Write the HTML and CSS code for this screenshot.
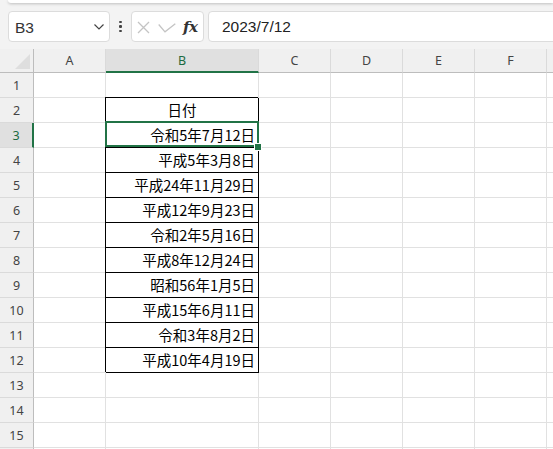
FILE: index.html
```html
<!DOCTYPE html>
<html lang="ja">
<head>
<meta charset="utf-8">
<title>Sheet</title>
<link rel="stylesheet" href="styles.css">
</head>
<body>
<div class="app">
  <div class="ribbon-edge"></div>
  <div class="fbar">
    <div class="namebox">
      <span class="nb-text">B3</span>
      <svg class="chev" width="10" height="6" viewBox="0 0 10 6"><path d="M0.5 0.5 L5 5 L9.5 0.5" fill="none" stroke="#444" stroke-width="1.2"/></svg>
    </div>
    <div class="dots"><span></span><span></span><span></span></div>
    <div class="fxbox">
      <svg class="ic-x" width="13" height="13" viewBox="0 0 13 13"><path d="M1 1 L12 12 M12 1 L1 12" stroke="#c4c4c4" stroke-width="1.3" fill="none"/></svg>
      <svg class="ic-ok" width="18" height="10" viewBox="0 0 18 10"><path d="M0.7 1.5 L7 8.8 L17.3 0.7" stroke="#c4c4c4" stroke-width="1.3" fill="none"/></svg>
      <span class="fx">fx</span>
    </div>
    <div class="formula">2023/7/12</div>
  </div>
  <div class="sheet">
    <div class="corner"><span class="tri"></span></div>
    <div class="ch">A</div><div class="ch sel">B</div><div class="ch">C</div><div class="ch">D</div><div class="ch">E</div><div class="ch">F</div><div class="ch"></div>

    <div class="rh">1</div><div class="c"></div><div class="c"></div><div class="c"></div><div class="c"></div><div class="c"></div><div class="c"></div><div class="c"></div>
    <div class="rh">2</div><div class="c"></div><div class="c b ctr">日付</div><div class="c"></div><div class="c"></div><div class="c"></div><div class="c"></div><div class="c"></div>
    <div class="rh sel">3</div><div class="c"></div><div class="c b r active">令和5年7月12日</div><div class="c"></div><div class="c"></div><div class="c"></div><div class="c"></div><div class="c"></div>
    <div class="rh">4</div><div class="c"></div><div class="c b r">平成5年3月8日</div><div class="c"></div><div class="c"></div><div class="c"></div><div class="c"></div><div class="c"></div>
    <div class="rh">5</div><div class="c"></div><div class="c b r">平成24年11月29日</div><div class="c"></div><div class="c"></div><div class="c"></div><div class="c"></div><div class="c"></div>
    <div class="rh">6</div><div class="c"></div><div class="c b r">平成12年9月23日</div><div class="c"></div><div class="c"></div><div class="c"></div><div class="c"></div><div class="c"></div>
    <div class="rh">7</div><div class="c"></div><div class="c b r">令和2年5月16日</div><div class="c"></div><div class="c"></div><div class="c"></div><div class="c"></div><div class="c"></div>
    <div class="rh">8</div><div class="c"></div><div class="c b r">平成8年12月24日</div><div class="c"></div><div class="c"></div><div class="c"></div><div class="c"></div><div class="c"></div>
    <div class="rh">9</div><div class="c"></div><div class="c b r">昭和56年1月5日</div><div class="c"></div><div class="c"></div><div class="c"></div><div class="c"></div><div class="c"></div>
    <div class="rh">10</div><div class="c"></div><div class="c b r">平成15年6月11日</div><div class="c"></div><div class="c"></div><div class="c"></div><div class="c"></div><div class="c"></div>
    <div class="rh">11</div><div class="c"></div><div class="c b r">令和3年8月2日</div><div class="c"></div><div class="c"></div><div class="c"></div><div class="c"></div><div class="c"></div>
    <div class="rh">12</div><div class="c"></div><div class="c b r">平成10年4月19日</div><div class="c"></div><div class="c"></div><div class="c"></div><div class="c"></div><div class="c"></div>
    <div class="rh">13</div><div class="c"></div><div class="c"></div><div class="c"></div><div class="c"></div><div class="c"></div><div class="c"></div><div class="c"></div>
    <div class="rh">14</div><div class="c"></div><div class="c"></div><div class="c"></div><div class="c"></div><div class="c"></div><div class="c"></div><div class="c"></div>
    <div class="rh">15</div><div class="c"></div><div class="c"></div><div class="c"></div><div class="c"></div><div class="c"></div><div class="c"></div><div class="c"></div>
    <div class="rh"></div><div class="c"></div><div class="c"></div><div class="c"></div><div class="c"></div><div class="c"></div><div class="c"></div><div class="c"></div>
  </div>
</div>
</body>
</html>
```

FILE: styles.css
```css
html, body {
  margin: 0;
  padding: 0;
  background: #f3f3f3;
  overflow: hidden;
}
.app {
  width: 553px;
  height: 449px;
  overflow: hidden;
  font-family: "Noto Sans", "Liberation Sans", sans-serif;
  color: #333;
}
.ribbon-edge {
  height: 3px;
  margin-left: 8px;
  background: #fff;
  border-radius: 0 0 0 5px;
  box-shadow: 0 1px 3px rgba(0,0,0,0.22);
}
.fbar {
  display: flex;
  align-items: stretch;
  height: 31px;
  margin-top: 8px;
  padding-left: 8px;
}
.namebox {
  box-sizing: border-box;
  width: 102px;
  background: #fff;
  border: 1px solid #dcdcdc;
  border-radius: 4px;
  display: flex;
  align-items: center;
  justify-content: space-between;
  padding: 0 5px 0 6px;
}
.nb-text {
  font-family: "Liberation Sans", sans-serif;
  font-size: 15.5px;
  color: #333;
  padding-top: 2px;
}
.chev { margin-top: 1px; }
.dots {
  width: 21px;
  display: flex;
  flex-direction: column;
  align-items: center;
  justify-content: center;
  gap: 2px;
}
.dots span {
  width: 2.5px;
  height: 2.5px;
  background: #444;
  border-radius: 1px;
}
.fxbox {
  box-sizing: border-box;
  width: 73px;
  background: #fff;
  border: 1px solid #dcdcdc;
  border-radius: 4px;
  display: flex;
  align-items: center;
  padding-left: 5px;
}
.ic-x { margin-top: 1px; }
.ic-ok { margin-left: 8px; margin-top: 3px; }
.fx {
  font-family: "DejaVu Serif", "Liberation Serif", serif;
  font-style: italic;
  font-weight: bold;
  font-size: 15px;
  color: #333;
  margin-left: 7px;
  letter-spacing: -0.5px;
}
.formula {
  box-sizing: border-box;
  flex: 1;
  margin-left: 4px;
  margin-right: -10px;
  background: #fff;
  border: 1px solid #dcdcdc;
  border-radius: 4px 0 0 4px;
  display: flex;
  align-items: center;
  padding-left: 13px;
  font-family: "Liberation Sans", sans-serif;
  font-size: 15.5px;
  color: #222;
  padding-top: 1px;
}
.sheet {
  margin-top: 7px;
  display: grid;
  grid-template-columns: 34px 72px 153px 72px 72px 72px 72px 72px;
  grid-template-rows: 24px;
  grid-auto-rows: 25px;
  width: 619px;
  background: #fff;
}
.corner {
  box-sizing: border-box;
  background: #f0f0f0;
  border-right: 1px solid #bdbdbd;
  border-bottom: 1px solid #bdbdbd;
  position: relative;
}
.tri {
  position: absolute;
  right: 3px;
  bottom: 3px;
  width: 0;
  height: 0;
  border-left: 15px solid transparent;
  border-bottom: 15px solid #dedede;
}
.ch {
  box-sizing: border-box;
  background: #f0f0f0;
  border-right: 1px solid #dadada;
  border-bottom: 1px solid #bdbdbd;
  display: flex;
  align-items: center;
  justify-content: center;
  font-size: 12.5px;
  color: #444;
}
.ch.sel {
  background: #e0e0e0;
  color: #1d6b40;
  border-bottom: 2px solid #217346;
}
.rh {
  box-sizing: border-box;
  background: #f0f0f0;
  border-right: 1px solid #bdbdbd;
  border-bottom: 1px solid #dadada;
  display: flex;
  align-items: center;
  justify-content: center;
  font-size: 12.5px;
  color: #444;
}
.rh.sel {
  background: #e0e0e0;
  color: #1d6b40;
  border-right: 2px solid #217346;
}
.c {
  box-sizing: border-box;
  border-right: 1px solid #e1e1e1;
  border-bottom: 1px solid #e1e1e1;
  background: #fff;
  font-family: "Noto Sans CJK JP", "Noto Sans", sans-serif;
  font-size: 14.5px;
  line-height: 24px;
  color: #000;
  white-space: nowrap;
  overflow: visible;
}
.c.b {
  border-right-color: #000;
  border-bottom-color: #000;
  box-shadow: -1px -1px 0 0 #000;
}
.c.r { text-align: right; padding-right: 3px; }
.c.ctr { text-align: center; }
.c.active { position: relative; }
.c.active::after {
  content: "";
  position: absolute;
  left: -1px;
  right: -1px;
  top: -2px;
  bottom: 0;
  border: 2px solid #217346;
}
.c.active::before {
  content: "";
  position: absolute;
  right: -4px;
  bottom: -4px;
  width: 6px;
  height: 6px;
  background: #217346;
  border: 1px solid #fff;
  z-index: 1;
}
```
